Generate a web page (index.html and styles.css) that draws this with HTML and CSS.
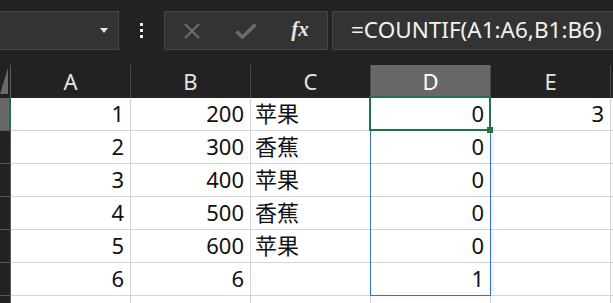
FILE: index.html
```html
<!DOCTYPE html>
<html lang="zh-CN">
<head>
    <meta charset="UTF-8">
    <title>Sheet</title>
    <link rel="stylesheet" href="styles.css">
</head>
<body>
    <!-- formula bar -->
    <div class="toolbar">
        <div class="namebox"><span class="caret"></span></div>
        <div class="more"><i></i><i></i><i></i></div>
        <div class="fbtns">
            <span class="slot">
                <svg width="18" height="16" viewBox="0 0 18 16"><path d="M2 1 L16 15 M16 1 L2 15" stroke="#6b6b6b" stroke-width="2.4" fill="none"/></svg>
            </span>
            <span class="slot">
                <svg width="22" height="16" viewBox="0 0 22 16"><path d="M1.5 8.5 L7.5 14 L20.5 1.5" stroke="#6b6b6b" stroke-width="3.6" fill="none"/></svg>
            </span>
            <span class="slot fx">fx</span>
        </div>
        <div class="formula">=COUNTIF(A1:A6,B1:B6)</div>
    </div>

    <!-- grid -->
    <div class="sheet">
        <div class="corner">
            <svg width="8" height="26" viewBox="0 0 8 26"><path d="M0 26 L8 26 L8 0 Z" fill="#6a6a6a"/></svg>
        </div>
        <div class="colhead">A</div>
        <div class="colhead">B</div>
        <div class="colhead">C</div>
        <div class="colhead sel">D</div>
        <div class="colhead">E</div>
        <div class="colhead"></div>

        <div class="rowhead sel"></div>
        <div class="cell num">1</div>
        <div class="cell num">200</div>
        <div class="cell">苹果</div>
        <div class="cell num active">0</div>
        <div class="cell num">3</div>
        <div class="cell"></div>

        <div class="rowhead"></div>
        <div class="cell num">2</div>
        <div class="cell num">300</div>
        <div class="cell">香蕉</div>
        <div class="cell num range">0</div>
        <div class="cell"></div>
        <div class="cell"></div>

        <div class="rowhead"></div>
        <div class="cell num">3</div>
        <div class="cell num">400</div>
        <div class="cell">苹果</div>
        <div class="cell num range">0</div>
        <div class="cell"></div>
        <div class="cell"></div>

        <div class="rowhead"></div>
        <div class="cell num">4</div>
        <div class="cell num">500</div>
        <div class="cell">香蕉</div>
        <div class="cell num range">0</div>
        <div class="cell"></div>
        <div class="cell"></div>

        <div class="rowhead"></div>
        <div class="cell num">5</div>
        <div class="cell num">600</div>
        <div class="cell">苹果</div>
        <div class="cell num range">0</div>
        <div class="cell"></div>
        <div class="cell"></div>

        <div class="rowhead"></div>
        <div class="cell num">6</div>
        <div class="cell num">6</div>
        <div class="cell"></div>
        <div class="cell num range last">1</div>
        <div class="cell"></div>
        <div class="cell"></div>

        <div class="rowhead"></div>
        <div class="cell"></div>
        <div class="cell"></div>
        <div class="cell"></div>
        <div class="cell"></div>
        <div class="cell"></div>
        <div class="cell"></div>
    </div>
</body>
</html>
```

FILE: styles.css
```css
body {
    margin: 0;
    height: 100vh;
    background-color: #222222;
    font-family: "Noto Sans", "Noto Sans CJK SC", sans-serif;
    overflow: hidden;
}

/* formula bar */
.toolbar {
    display: flex;
    align-items: flex-start;
    height: 65px;
    padding-top: 11px;
    box-sizing: border-box;
    background-color: #222222;
}

.namebox,
.fbtns,
.formula {
    height: 39px;
    box-sizing: border-box;
    background-color: #333333;
    border: 1px solid #464646;
}

.namebox {
    width: 119px;
    border-left: none;
    display: flex;
    align-items: center;
    justify-content: flex-end;
    padding-right: 10px;
}

.caret {
    width: 0;
    height: 0;
    border-left: 4px solid transparent;
    border-right: 4px solid transparent;
    border-top: 5px solid #e8e8e8;
}

.more {
    width: 45px;
    height: 39px;
    display: flex;
    flex-direction: column;
    align-items: center;
    justify-content: center;
    gap: 3px;
}

.more i {
    display: block;
    width: 3px;
    height: 3px;
    background-color: #f0f0f0;
}

.fbtns {
    width: 164px;
    display: flex;
}

.slot {
    width: 54px;
    display: flex;
    align-items: center;
    justify-content: center;
}

.fx {
    font-family: "Liberation Serif", serif;
    font-style: italic;
    font-weight: bold;
    font-size: 21px;
    color: #e6e6e6;
    padding-bottom: 3px;
}

.formula {
    flex: 1;
    margin-left: 4px;
    border-right: none;
    padding-left: 18px;
    color: #f2f2f2;
    font-size: 22.5px;
    line-height: 36px;
    white-space: nowrap;
}

/* sheet grid */
.sheet {
    display: grid;
    height: calc(100vh - 65px);
    overflow: hidden;
    grid-template-columns: 11px repeat(5, 120px) 1fr;
    grid-template-rows: 33px;
    grid-auto-rows: 33px;
    font-size: 22px;
}

.corner {
    background-color: #222222;
    border-right: 1px solid #5a5a5a;
    display: flex;
    align-items: flex-end;
    padding-bottom: 4px;
}

.colhead {
    background-color: #222222;
    border-right: 1px solid #4a4a4a;
    color: #e4e4e4;
    text-align: center;
    line-height: 33px;
}

.colhead.sel {
    background-color: #686868;
    color: #ffffff;
}

.rowhead {
    background-color: #222222;
    border-right: 1px solid #5a5a5a;
    border-bottom: 1px solid #5a5a5a;
}

.rowhead.sel {
    background-color: #686868;
    border-right: 2px solid #1e7145;
}

.cell {
    background-color: #ffffff;
    border-right: 1px solid #d4d4d4;
    border-bottom: 1px solid #d4d4d4;
    color: #111111;
    line-height: 31px;
    padding: 0 4px;
    white-space: nowrap;
}

.cell.num {
    text-align: right;
    padding-right: 6px;
}

.active,
.range {
    position: relative;
}

.active::after {
    content: "";
    position: absolute;
    top: -2px;
    left: -2px;
    right: -1px;
    bottom: -1px;
    border: 2px solid #217346;
}

.active::before {
    content: "";
    position: absolute;
    right: -3px;
    bottom: -3px;
    width: 6px;
    height: 6px;
    background-color: #217346;
    z-index: 1;
}

.range::after {
    content: "";
    position: absolute;
    top: 0;
    left: -1px;
    right: -1px;
    bottom: -1px;
    border-left: 1px solid #3a6fd2;
    border-right: 1px solid #3a6fd2;
    box-shadow: 3px 0 5px -2px rgba(0, 0, 0, 0.12);
}

.range.last::after {
    border-bottom: 1px solid #3a6fd2;
}
```
